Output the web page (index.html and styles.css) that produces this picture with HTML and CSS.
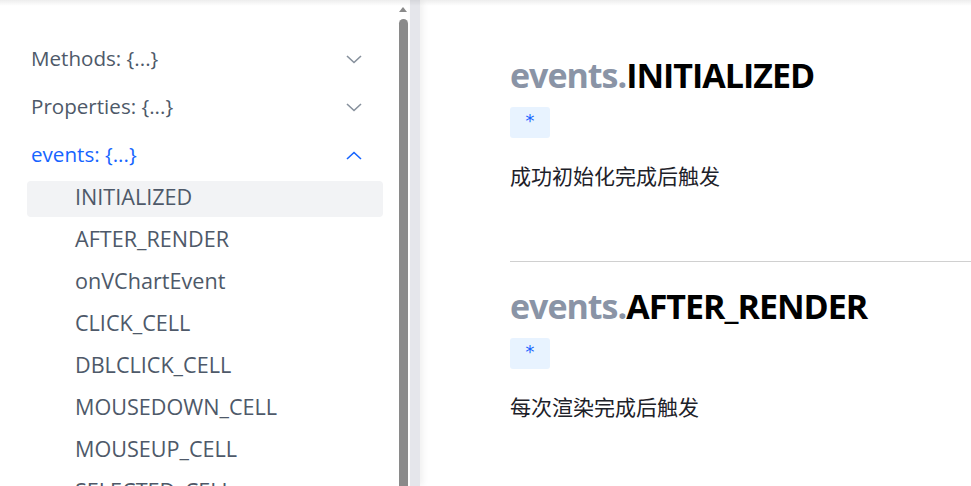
FILE: index.html
```html
<!DOCTYPE html>
<html lang="zh-CN">
<head>
<meta charset="utf-8">
<title>events</title>
<link rel="stylesheet" href="styles.css">
</head>
<body>
<div class="top-shadow"></div>
<div class="layout">
  <aside class="sidebar">
    <div class="group">
      <div class="group-head"><span>Methods: {...}</span>
        <svg class="chev" width="16" height="9" viewBox="0 0 16 9"><polyline points="1,1 8,7.5 15,1" fill="none" stroke="currentColor" stroke-width="1.6"/></svg>
      </div>
    </div>
    <div class="group">
      <div class="group-head"><span>Properties: {...}</span>
        <svg class="chev" width="16" height="9" viewBox="0 0 16 9"><polyline points="1,1 8,7.5 15,1" fill="none" stroke="currentColor" stroke-width="1.6"/></svg>
      </div>
    </div>
    <div class="group open">
      <div class="group-head"><span>events: {...}</span>
        <svg class="chev" width="16" height="9" viewBox="0 0 16 9"><polyline points="1,8 8,1.5 15,8" fill="none" stroke="currentColor" stroke-width="1.6"/></svg>
      </div>
      <ul class="sub">
        <li class="active">INITIALIZED</li>
        <li>AFTER_RENDER</li>
        <li>onVChartEvent</li>
        <li>CLICK_CELL</li>
        <li>DBLCLICK_CELL</li>
        <li>MOUSEDOWN_CELL</li>
        <li>MOUSEUP_CELL</li>
        <li>SELECTED_CELL</li>
      </ul>
    </div>
  </aside>
  <div class="scrollbar">
    <div class="arrow"></div>
    <div class="thumb"></div>
  </div>
  <div class="band"></div>
  <main class="main">
    <section class="entry">
      <h2 class="title"><span class="prefix">events.</span>INITIALIZED</h2>
      <div class="badge">*</div>
      <p class="desc">成功初始化完成后触发</p>
    </section>
    <hr class="divider">
    <section class="entry">
      <h2 class="title"><span class="prefix">events.</span>AFTER_RENDER</h2>
      <div class="badge">*</div>
      <p class="desc">每次渲染完成后触发</p>
    </section>
  </main>
</div>
</body>
</html>
```

FILE: styles.css
```css
html, body {
  margin: 0;
  padding: 0;
  height: 100%;
  overflow: hidden;
  background: #fff;
}
body {
  font-family: "Open Sans", "Noto Sans CJK SC", sans-serif;
  position: relative;
}
.top-shadow {
  position: absolute;
  left: 0;
  right: 0;
  top: 0;
  height: 6px;
  background: linear-gradient(to bottom, rgba(0,0,0,0.07), rgba(0,0,0,0));
  z-index: 5;
}
.layout {
  display: flex;
  height: 486px;
}
.sidebar {
  width: 396px;
  flex: none;
  box-sizing: border-box;
  padding: 35px 13px 0 27px;
}
.group-head {
  display: flex;
  align-items: center;
  justify-content: space-between;
  height: 48px;
  padding: 0 21px 0 4px;
  font-size: 20.6px;
  color: #4e5969;
}
.group-head span {
  margin-top: -2px;
}
.chev {
  color: #86909c;
}
.group.open .group-head {
  color: #1664ff;
}
.group.open .chev {
  color: #1664ff;
}
.sub {
  list-style: none;
  margin: 2px 0 0;
  padding: 0;
  display: flex;
  flex-direction: column;
  gap: 6px;
}
.sub li {
  height: 36px;
  line-height: 32px;
  padding-left: 48px;
  font-size: 21.6px;
  color: #4e5969;
  border-radius: 4px;
}
.sub li.active {
  background: #f2f3f5;
}
.scrollbar {
  width: 14px;
  flex: none;
  display: flex;
  flex-direction: column;
  align-items: center;
  padding-top: 7px;
  box-sizing: border-box;
}
.arrow {
  width: 0;
  height: 0;
  border-left: 4.5px solid transparent;
  border-right: 4.5px solid transparent;
  border-bottom: 5px solid #8a8a8a;
}
.thumb {
  margin-top: 7px;
  width: 9px;
  flex: 1;
  background: #8a8a8a;
  border-radius: 5px 5px 0 0;
}
.band {
  width: 10px;
  flex: none;
  background: #e5e6eb;
  box-shadow: 3px 0 6px rgba(0,0,0,0.06);
}
.main {
  flex: 1;
  padding: 53px 0 0 90px;
  min-width: 0;
}
.title {
  margin: 0;
  font-size: 34px;
  line-height: 44px;
  font-weight: 700;
  color: #000;
  letter-spacing: -1px;
}
.prefix {
  color: #8a94a6;
}
.badge {
  margin-top: 10px;
  width: 40px;
  height: 31px;
  background: #e8f3ff;
  border-radius: 3px;
  color: #1664ff;
  font-size: 18px;
  text-align: center;
  line-height: 28px;
  font-family: "DejaVu Sans Mono", monospace;
}
.desc {
  margin: 21px 0 0;
  font-size: 21px;
  line-height: 32px;
  color: #1d2129;
  font-family: "Noto Sans CJK SC", sans-serif;
}
.divider {
  margin: 70px 0 22px;
  border: 0;
  border-top: 1px solid #d0d0d0;
  height: 0;
}
```
